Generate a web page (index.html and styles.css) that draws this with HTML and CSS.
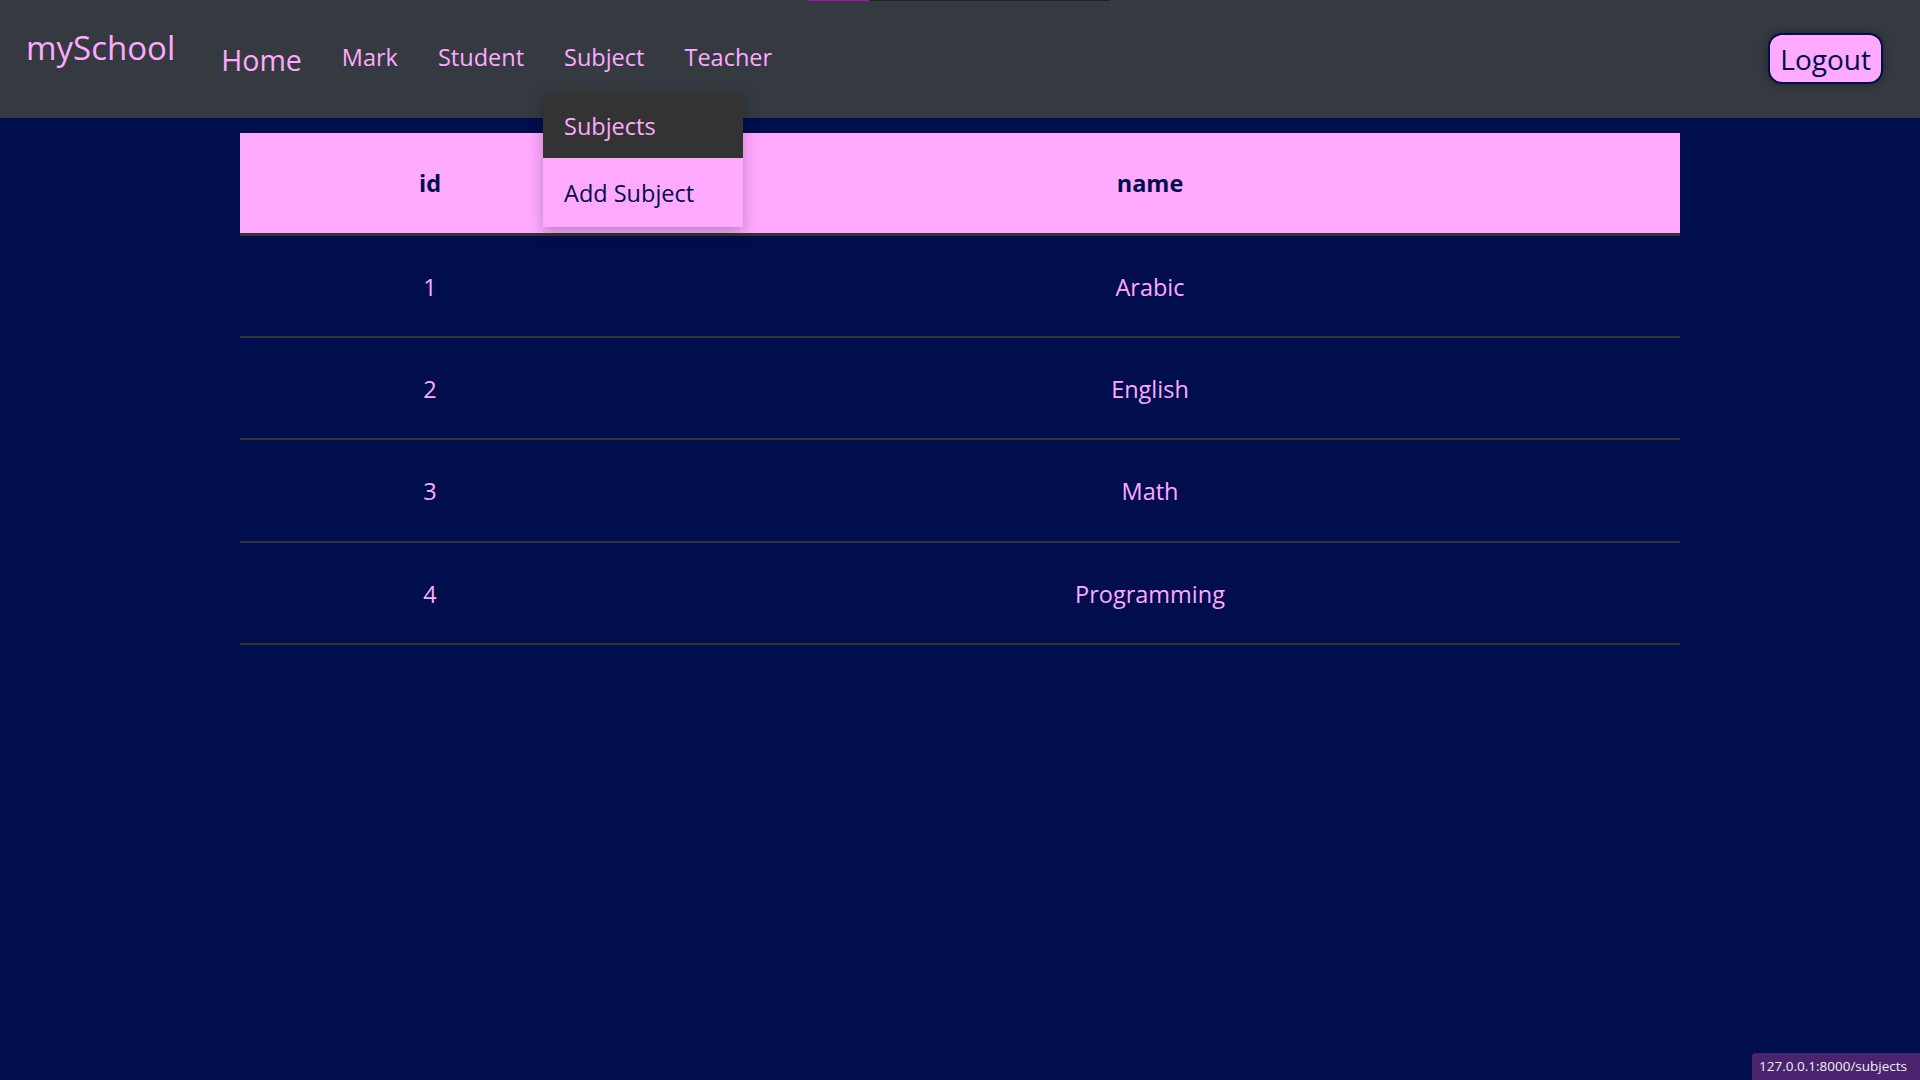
FILE: index.html
```html
<!DOCTYPE html>
<html lang="en">
<head>
<meta charset="utf-8">
<title>mySchool - Subjects</title>
<link rel="stylesheet" href="styles.css">
</head>
<body>
<div class="progress"><span class="progress-fill"></span><span class="progress-rest"></span></div>
<nav class="navbar">
  <a class="brand" href="#">mySchool</a>
  <ul class="nav">
    <li><a class="nav-link home" href="#">Home</a></li>
    <li><a class="nav-link" href="#">Mark</a></li>
    <li><a class="nav-link" href="#">Student</a></li>
    <li class="has-menu">
      <a class="nav-link" href="#">Subject</a>
      <ul class="menu">
        <li><a class="menu-item active" href="#">Subjects</a></li>
        <li><a class="menu-item" href="#">Add Subject</a></li>
      </ul>
    </li>
    <li><a class="nav-link" href="#">Teacher</a></li>
  </ul>
  <button class="logout" type="button">Logout</button>
</nav>
<main class="content">
  <table class="grid">
    <thead>
      <tr><th class="col-id">id</th><th>name</th></tr>
    </thead>
    <tbody>
      <tr><td>1</td><td>Arabic</td></tr>
      <tr><td>2</td><td>English</td></tr>
      <tr><td>3</td><td>Math</td></tr>
      <tr><td>4</td><td>Programming</td></tr>
    </tbody>
  </table>
</main>
<div class="status">127.0.0.1:8000/subjects</div>
</body>
</html>
```
FILE: styles.css
```css
* { box-sizing: border-box; }
html, body { margin: 0; padding: 0; }
body {
  background: #010e4d;
  font-family: "Segoe UI", "Open Sans", "Noto Sans", sans-serif;
  color: #ffaaff;
  min-height: 1080px;
}
a { text-decoration: none; color: inherit; }
ul { list-style: none; margin: 0; padding: 0; }

.progress {
  position: absolute;
  top: 0;
  left: 809px;
  display: flex;
  height: 1px;
  z-index: 10;
}
.progress-fill { width: 60px; background: #a014b4; }
.progress-rest { width: 241px; background: #222; }

.navbar {
  height: 118px;
  background: #343a40;
  display: flex;
  align-items: flex-start;
  padding: 0 37px 0 26px;
}
.brand {
  font-size: 33px;
  line-height: 1;
  margin-top: 31px;
  color: #ffaaff;
}
.nav {
  display: flex;
  align-items: flex-start;
  margin-left: 26px;
}
.nav > li { position: relative; }
.nav-link {
  display: block;
  font-size: 23.5px;
  line-height: 1;
  padding: 46px 20px 0;
  color: #ffaaff;
}
.nav-link.home {
  font-size: 28.5px;
  padding-top: 46px;
}
.menu {
  position: absolute;
  top: 92px;
  left: -1px;
  width: 200px;
  background: #ffaaff;
  box-shadow: 0 6px 14px rgba(0, 0, 0, 0.25);
  z-index: 5;
}
.menu-item {
  display: block;
  font-size: 23.5px;
  line-height: 1;
  padding: 24px 21px 0;
  color: #010e4d;
  height: 69px;
}
.menu-item.active {
  background: #333333;
  color: #ffaaff;
  height: 66px;
  padding-top: 23px;
}
.logout {
  margin-left: auto;
  margin-top: 33px;
  font-family: inherit;
  font-size: 28px;
  line-height: 1;
  padding: 10px 10px 9px;
  background: #ffaaff;
  color: #010e4d;
  border: 2px solid #010e4d;
  border-radius: 14px;
  box-shadow: 0 0 10px rgba(0, 0, 0, 0.35);
}

.content {
  padding-top: 15px;
  display: flex;
  justify-content: center;
}
.grid {
  width: 1440px;
  border-collapse: collapse;
  font-size: 23.5px;
}
.grid th {
  background: #ffaaff;
  color: #010e4d;
  font-weight: 700;
  height: 101px;
  padding: 0;
  text-align: center;
  border-bottom: 3px solid #343436;
}
.grid .col-id { width: 380px; }
.grid td {
  height: 102.6px;
  padding: 2px 0 0;
  text-align: center;
  color: #ffaaff;
  border-bottom: 2px solid #333333;
}

.status {
  position: fixed;
  right: 0;
  bottom: 0;
  width: 168px;
  height: 27px;
  background: #4a236f;
  color: #f0f0f0;
  font-size: 13.5px;
  line-height: 27px;
  padding-left: 7px;
  border-top-left-radius: 4px;
  white-space: nowrap;
}
```
